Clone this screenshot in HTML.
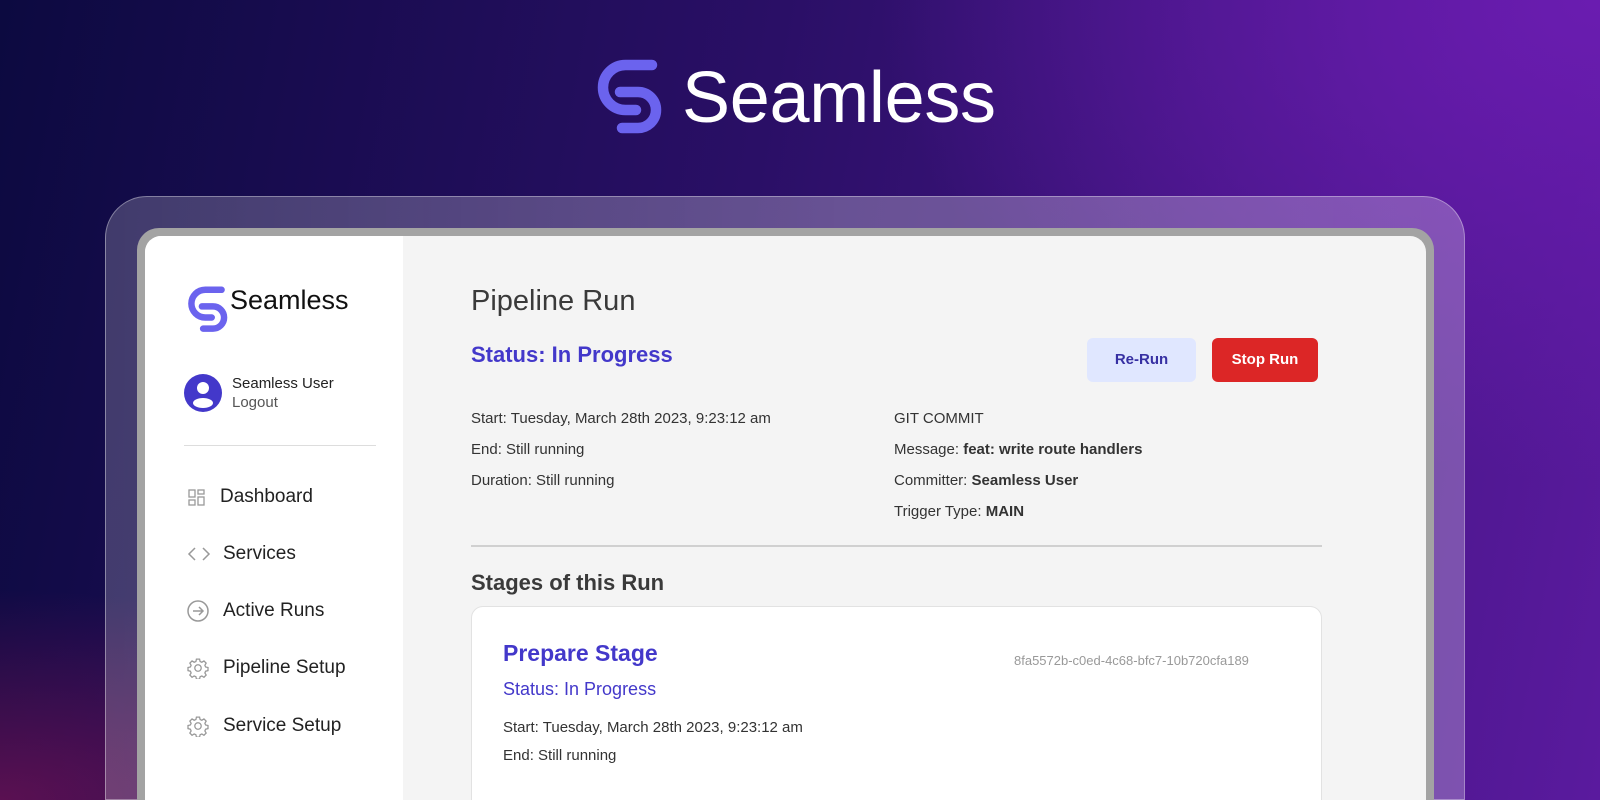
<!DOCTYPE html>
<html><head><meta charset="utf-8"><style>
*{margin:0;padding:0;box-sizing:border-box}
html{width:1600px;height:800px;overflow:hidden}
body{width:1600px;height:800px;overflow:hidden;position:relative;font-family:"Liberation Sans",sans-serif;
background:
radial-gradient(ellipse 700px 300px at 0px 800px, rgba(150,20,90,.55), transparent 70%),
radial-gradient(ellipse 900px 600px at 1600px 0px, #6a1cb0, transparent 80%),
linear-gradient(100deg,#0c0a40 0%,#2a0f66 45%,#5a1a9e 100%);}
.a{position:absolute;white-space:nowrap}
.frame{position:absolute;left:105px;top:196px;width:1360px;height:604px;border-radius:42px 42px 0 0;border-bottom:none;
background:linear-gradient(90deg,rgba(255,255,255,.2),rgba(255,255,255,.28) 55%,rgba(255,255,255,.25));border:1px solid rgba(255,255,255,.35)}
.bezel{position:absolute;left:137px;top:228px;width:1297px;height:572px;border-radius:22px 22px 0 0;background:#a3a3a3}
.screen{position:absolute;left:145px;top:236px;width:1281px;height:564px;border-radius:16px 16px 0 0;background:#f4f4f4;overflow:hidden}
.side{position:absolute;left:0;top:0;width:258px;height:100%;background:#fff}
.nav{font-size:19px;color:#222}
.t{font-size:15px;color:#333}
</style></head><body>
<div class="frame"></div>
<div class="bezel"></div>

<svg class="a" style="left:578px;top:54px" width="86" height="86" viewBox="0 0 86 86">
<path d="M74 11 H47.5 A22.5 22.5 0 0 0 47.5 56 H58" fill="none" stroke="#6b63ee" stroke-width="10.5" stroke-linecap="round"/>
<path d="M44 74 H60 A18 18 0 0 0 60 38 H42" fill="none" stroke="#6b63ee" stroke-width="10.5" stroke-linecap="round"/>
</svg>
<div class="a" style="left:682px;top:55px;font-size:72px;color:#fff;letter-spacing:-0.3px;line-height:86px">Seamless</div>

<div class="screen">
 <div class="side">
  <svg class="a" style="left:31px;top:47px" width="53" height="53" viewBox="0 0 86 86">
  <path d="M74 11 H47.5 A22.5 22.5 0 0 0 47.5 56 H58" fill="none" stroke="#6b63ee" stroke-width="10.5" stroke-linecap="round"/>
  <path d="M44 74 H60 A18 18 0 0 0 60 38 H42" fill="none" stroke="#6b63ee" stroke-width="10.5" stroke-linecap="round"/>
  </svg>
  <div class="a" style="left:85px;top:49px;font-size:27px;color:#111">Seamless</div>
  <svg class="a" style="left:39px;top:138px" width="38" height="38" viewBox="0 0 38 38"><circle cx="19" cy="19" r="19" fill="#4338ca"/><circle cx="19" cy="14" r="6" fill="#fff"/><ellipse cx="19" cy="29" rx="10" ry="5" fill="#fff"/></svg>
  <div class="a" style="left:87px;top:139px;font-size:15px;color:#222">Seamless User</div>
  <div class="a" style="left:87px;top:158px;font-size:15px;color:#555">Logout</div>
  <div class="a" style="left:39px;top:209px;width:192px;height:1px;background:#ddd"></div>
  <svg class="a" style="left:43px;top:253px" width="18" height="18" viewBox="0 0 18 18" fill="none" stroke="#999" stroke-width="1.3"><rect x="1" y="1" width="6" height="7"/><rect x="10" y="1" width="6" height="4"/><rect x="1" y="11" width="6" height="5"/><rect x="10" y="8" width="6" height="8"/></svg>
  <div class="a nav" style="left:75px;top:250px">Dashboard</div>
  <svg class="a" style="left:42px;top:309px" width="24" height="18" viewBox="0 0 24 18" fill="none" stroke="#999" stroke-width="1.5"><path d="M8 3 L2 9 L8 15 M16 3 L22 9 L16 15"/></svg>
  <div class="a nav" style="left:78px;top:307px">Services</div>
  <svg class="a" style="left:42px;top:364px" width="22" height="22" viewBox="0 0 22 22" fill="none" stroke="#999" stroke-width="1.5"><circle cx="11" cy="11" r="10"/><path d="M6 11 H16 M12 7 L16 11 L12 15"/></svg>
  <div class="a nav" style="left:78px;top:364px">Active Runs</div>
  <svg class="a" style="left:42px;top:421px" width="22" height="22" viewBox="0 0 24 24" fill="none" stroke="#999" stroke-width="1.4"><path d="M10.3 2.3h3.4l.6 2.6 1.9.8 2.3-1.4 2.4 2.4-1.4 2.3.8 1.9 2.6.6v3.4l-2.6.6-.8 1.9 1.4 2.3-2.4 2.4-2.3-1.4-1.9.8-.6 2.6h-3.4l-.6-2.6-1.9-.8-2.3 1.4-2.4-2.4 1.4-2.3-.8-1.9-2.6-.6v-3.4l2.6-.6.8-1.9-1.4-2.3 2.4-2.4 2.3 1.4 1.9-.8z"/><circle cx="12" cy="12" r="3.5"/></svg>
  <div class="a nav" style="left:78px;top:421px">Pipeline Setup</div>
  <svg class="a" style="left:42px;top:479px" width="22" height="22" viewBox="0 0 24 24" fill="none" stroke="#999" stroke-width="1.4"><path d="M10.3 2.3h3.4l.6 2.6 1.9.8 2.3-1.4 2.4 2.4-1.4 2.3.8 1.9 2.6.6v3.4l-2.6.6-.8 1.9 1.4 2.3-2.4 2.4-2.3-1.4-1.9.8-.6 2.6h-3.4l-.6-2.6-1.9-.8-2.3 1.4-2.4-2.4 1.4-2.3-.8-1.9-2.6-.6v-3.4l2.6-.6.8-1.9-1.4-2.3 2.4-2.4 2.3 1.4 1.9-.8z"/><circle cx="12" cy="12" r="3.5"/></svg>
  <div class="a nav" style="left:78px;top:479px">Service Setup</div>
 </div>

 <div class="a" style="left:326px;top:49px;font-size:29px;color:#3a3a3a">Pipeline Run</div>
 <div class="a" style="left:326px;top:106px;font-size:22px;font-weight:bold;color:#4338ca">Status: In Progress</div>
 <div class="a" style="left:942px;top:102px;width:109px;height:44px;border-radius:6px;background:#e0e7ff;color:#3730a3;font-size:15px;font-weight:bold;text-align:center;line-height:44px">Re-Run</div>
 <div class="a" style="left:1067px;top:102px;width:106px;height:44px;border-radius:6px;background:#dc2626;color:#fff;font-size:15px;font-weight:bold;text-align:center;line-height:44px">Stop Run</div>

 <div class="a t" style="left:326px;top:174px">Start: Tuesday, March 28th 2023, 9:23:12 am</div>
 <div class="a t" style="left:326px;top:205px">End: Still running</div>
 <div class="a t" style="left:326px;top:236px">Duration: Still running</div>
 <div class="a t" style="left:749px;top:174px">GIT COMMIT</div>
 <div class="a t" style="left:749px;top:205px">Message: <b>feat: write route handlers</b></div>
 <div class="a t" style="left:749px;top:236px">Committer: <b>Seamless User</b></div>
 <div class="a t" style="left:749px;top:267px">Trigger Type: <b>MAIN</b></div>
 <div class="a" style="left:326px;top:309px;width:851px;height:2px;background:#d0d0d0"></div>
 <div class="a" style="left:326px;top:334px;font-size:22px;font-weight:bold;color:#3a3a3a">Stages of this Run</div>

 <div class="a" style="left:326px;top:370px;width:851px;height:220px;background:#fff;border:1px solid #e2e2e2;border-radius:12px">
  <div class="a" style="left:31px;top:33px;font-size:23px;font-weight:bold;color:#4338ca">Prepare Stage</div>
  <div class="a" style="left:542px;top:46px;font-size:13px;color:#999">8fa5572b-c0ed-4c68-bfc7-10b720cfa189</div>
  <div class="a" style="left:31px;top:72px;font-size:18px;color:#4338ca">Status: In Progress</div>
  <div class="a t" style="left:31px;top:112px">Start: Tuesday, March 28th 2023, 9:23:12 am</div>
  <div class="a t" style="left:31px;top:140px">End: Still running</div>
 </div>
</div>
</body></html>
